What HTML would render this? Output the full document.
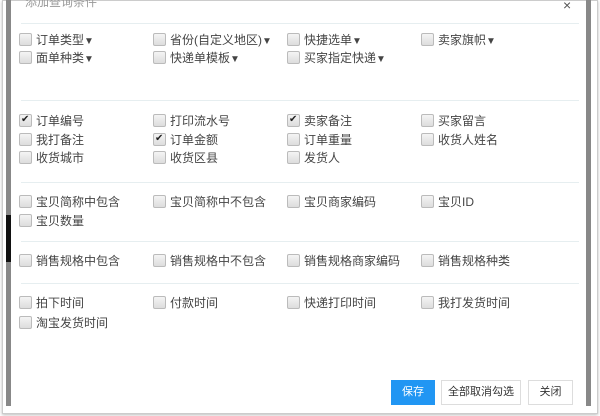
<!DOCTYPE html><html><head><meta charset="utf-8"><style>
body{margin:0;width:600px;height:416px;background:#fff;position:relative;overflow:hidden;font-family:"Liberation Sans","Noto Sans CJK SC",sans-serif;font-size:12px;color:#444}
.frame{position:absolute;left:2px;top:0;width:594px;height:412px;border:1px solid #ccc;box-shadow:0 1px 3px #bbb}
.ls{position:absolute;left:6px;top:0;width:5px;height:406px;background:#888}
.rs{position:absolute;left:586px;top:0;width:5px;height:406px;background:#888}
.dlg{position:absolute;left:11px;top:1px;width:575px;height:405px;background:#fff}
.it{position:absolute;height:16px;line-height:16px;white-space:nowrap}
.cb{display:inline-block;width:11px;height:11px;border:1px solid #bbb;background:linear-gradient(#f4f4f4,#ddd);border-radius:2px;vertical-align:-2px;margin-right:4px;position:relative}
.ck:after{content:"✔";position:absolute;left:1px;top:-3px;font-size:10px;color:#222}
.sep{position:absolute;left:21px;width:558px;height:1px;background:#e6eef0}
.btn{position:absolute;top:380px;height:23px;line-height:23px;text-align:center;border:1px solid #ddd;background:#fff;color:#333;font-size:11px}
.a{font-size:10px}
</style></head><body>
<div class="frame"></div>
<div class="ls"></div><div style="position:absolute;left:6px;top:215px;width:5px;height:47px;background:#111"></div>
<div class="rs"></div>
<div class="dlg"></div>
<div class="it" style="left:25px;top:-6px;color:#999;font-size:12px">添加查询条件</div>
<div class="it" style="left:563px;top:-3px;color:#555;font-size:14px">×</div>
<div class="sep" style="top:23px"></div>
<div class="it" style="left:19px;top:32px"><span class="cb"></span>订单类型<span class="a">▼</span></div>
<div class="it" style="left:153px;top:32px"><span class="cb"></span>省份(自定义地区)<span class="a">▼</span></div>
<div class="it" style="left:287px;top:32px"><span class="cb"></span>快捷选单<span class="a">▼</span></div>
<div class="it" style="left:421px;top:32px"><span class="cb"></span>卖家旗帜<span class="a">▼</span></div>
<div class="it" style="left:19px;top:50px"><span class="cb"></span>面单种类<span class="a">▼</span></div>
<div class="it" style="left:153px;top:50px"><span class="cb"></span>快递单模板<span class="a">▼</span></div>
<div class="it" style="left:287px;top:50px"><span class="cb"></span>买家指定快递<span class="a">▼</span></div>
<div class="sep" style="top:100px"></div>
<div class="it" style="left:19px;top:113px"><span class="cb ck"></span>订单编号</div>
<div class="it" style="left:153px;top:113px"><span class="cb"></span>打印流水号</div>
<div class="it" style="left:287px;top:113px"><span class="cb ck"></span>卖家备注</div>
<div class="it" style="left:421px;top:113px"><span class="cb"></span>买家留言</div>
<div class="it" style="left:19px;top:132px"><span class="cb"></span>我打备注</div>
<div class="it" style="left:153px;top:132px"><span class="cb ck"></span>订单金额</div>
<div class="it" style="left:287px;top:132px"><span class="cb"></span>订单重量</div>
<div class="it" style="left:421px;top:132px"><span class="cb"></span>收货人姓名</div>
<div class="it" style="left:19px;top:150px"><span class="cb"></span>收货城市</div>
<div class="it" style="left:153px;top:150px"><span class="cb"></span>收货区县</div>
<div class="it" style="left:287px;top:150px"><span class="cb"></span>发货人</div>
<div class="sep" style="top:182px"></div>
<div class="it" style="left:19px;top:194px"><span class="cb"></span>宝贝简称中包含</div>
<div class="it" style="left:153px;top:194px"><span class="cb"></span>宝贝简称中不包含</div>
<div class="it" style="left:287px;top:194px"><span class="cb"></span>宝贝商家编码</div>
<div class="it" style="left:421px;top:194px"><span class="cb"></span>宝贝ID</div>
<div class="it" style="left:19px;top:213px"><span class="cb"></span>宝贝数量</div>
<div class="sep" style="top:241px"></div>
<div class="it" style="left:19px;top:253px"><span class="cb"></span>销售规格中包含</div>
<div class="it" style="left:153px;top:253px"><span class="cb"></span>销售规格中不包含</div>
<div class="it" style="left:287px;top:253px"><span class="cb"></span>销售规格商家编码</div>
<div class="it" style="left:421px;top:253px"><span class="cb"></span>销售规格种类</div>
<div class="sep" style="top:283px"></div>
<div class="it" style="left:19px;top:295px"><span class="cb"></span>拍下时间</div>
<div class="it" style="left:153px;top:295px"><span class="cb"></span>付款时间</div>
<div class="it" style="left:287px;top:295px"><span class="cb"></span>快递打印时间</div>
<div class="it" style="left:421px;top:295px"><span class="cb"></span>我打发货时间</div>
<div class="it" style="left:19px;top:315px"><span class="cb"></span>淘宝发货时间</div>
<div class="btn" style="left:391px;width:42px;background:#2196f3;border-color:#2196f3;color:#fff">保存</div>
<div class="btn" style="left:441px;width:78px">全部取消勾选</div>
<div class="btn" style="left:528px;width:43px">关闭</div>
</body></html>
